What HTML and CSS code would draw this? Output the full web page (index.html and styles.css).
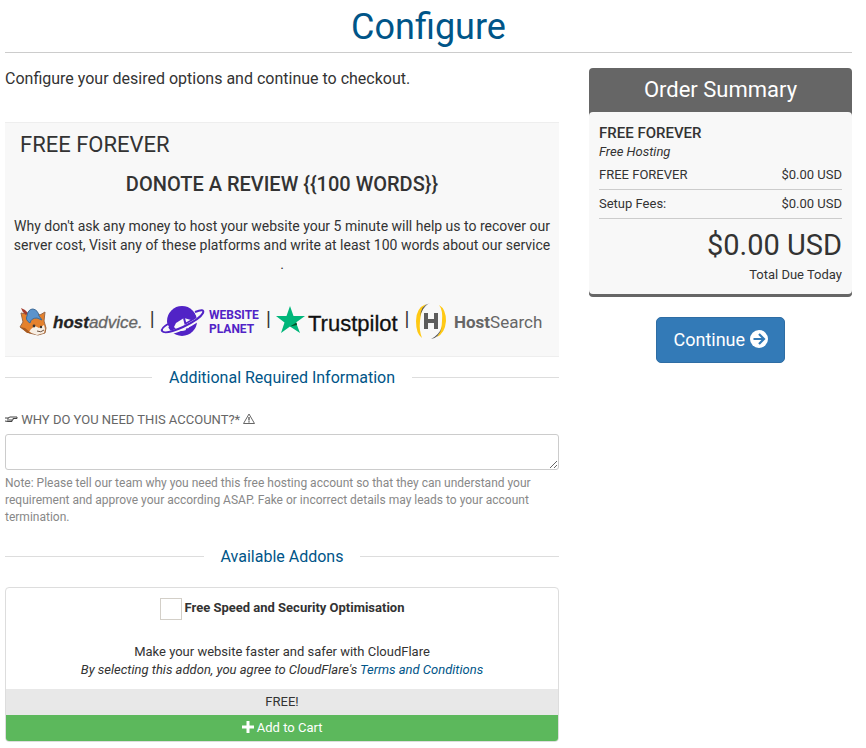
FILE: index.html
```html
<!DOCTYPE html>
<html lang="en">
<head>
<meta charset="utf-8">
<meta name="viewport" content="width=device-width, initial-scale=1">
<title>Configure</title>
<link rel="stylesheet" href="styles.css">
</head>
<body>
<main class="page">
  <h1 class="page-title">Configure</h1>
  <div class="columns">
    <div class="main-col">
      <p class="intro">Configure your desired options and continue to checkout.</p>

      <section class="product">
        <h2 class="product-title">FREE FOREVER</h2>
        <h3 class="product-heading">DONOTE A REVIEW {{100 WORDS}}</h3>
        <p class="product-text">Why don't ask any money to host your website your 5 minute will help us to recover our server cost, Visit any of these platforms and write at least 100 words about our service<br>.</p>
        <div class="logos">
          <svg class="logo" width="125" height="42" viewBox="0 0 125 42" role="img" aria-label="hostadvice">
            <path d="M1 13L6 14L13 11L20 15L25 12L24 21L26 28L25 33L18 35L9 33L3 29L0 27L3 22Z" fill="#e5812c" stroke="#9a6a49" stroke-width="1"/>
            <path d="M11 29L15 26L19 28L24 25L25 29L24 33L17 35L9 32Z" fill="#f7efe5"/>
            <path d="M0 27L5 28L11 33L7 33Z" fill="#a85a20"/>
            <path d="M1 8L5 10L8 13L6 15Q2 12 1 8Z" fill="#a33a2b"/>
            <path d="M7 16Q8 9 13 9Q18 10 19 16L22 20L17 18Q11 18 10 23Q5 20 7 16Z" fill="#5b93cc" stroke="#3c6a98" stroke-width="1"/>
            <circle cx="14" cy="26" r="1.4" fill="#3b3430"/><circle cx="21" cy="27" r="1.2" fill="#3b3430"/>
            <path d="M17 31Q21 33 24 30" fill="none" stroke="#6b5140" stroke-width="1"/>
            <text x="33" y="28" class="word-advice"><tspan class="word-host">host</tspan>advice.</text>
          </svg>
          <span class="bar">|</span>
          <svg class="logo" width="102" height="42" viewBox="0 0 102 42" role="img" aria-label="Website Planet">
            <circle cx="23" cy="21" r="15" fill="#5123c6"/>
            <path d="M15 27L17 23L25 18L32 20Q32 27 27 30Q20 33 15 27Z" fill="#f8f8f8"/>
            <path d="M25 18L28 30M26 24L33 20" stroke="#5123c6" stroke-width="2"/>
            <path d="M36 13Q46 9 44 14Q41 20 24 28Q6 36 3 32Q2 29 9 25" fill="none" stroke="#f8f8f8" stroke-width="4"/>
            <path d="M36 12Q46 8 44 13Q41 19 24 27Q6 35 3 31Q2 28 9 24" fill="none" stroke="#5123c6" stroke-width="2"/>
            <text x="50" y="19" class="word-planet">WEBSITE</text>
            <text x="50" y="33" class="word-planet">PLANET</text>
          </svg>
          <span class="bar">|</span>
          <svg class="logo" width="124" height="42" viewBox="0 0 124 42" role="img" aria-label="Trustpilot">
            <path d="M14 6L17.500 16H29L20 22.500L24 33L14 26.500L5 33L8.500 22.500L0 16H10.500Z" fill="#00b67a"/>
            <path d="M14 26.500L20.500 22.500L21 25Z" fill="#005128"/>
            <text x="32" y="31" class="word-trust">Trustpilot</text>
          </svg>
          <span class="bar">|</span>
          <svg class="logo" width="130" height="42" viewBox="0 0 130 42" role="img" aria-label="HostSearch">
            <path d="M12 4Q2 8 2 21Q2 34 8 38Q5 31 6 21Q7 9 12 4Z" fill="#ffc914"/>
            <path d="M6 17Q7 5 16 3L14 4Q8 8 6 17Z" fill="#555"/>
            <path d="M25 5Q32 9 32 21Q31 33 23 37Q28 30 28 21Q29 10 25 5Z" fill="#ffc914"/>
            <path d="M28 27Q25 38 17 39Q25 35 28 27Z" fill="#555"/>
            <path d="M12 13V29M22 13V29M12 21H22" stroke="#5c5c5c" stroke-width="4"/>
            <text x="40" y="28" class="word-search"><tspan class="word-bold">Host</tspan>Search</text>
          </svg>
        </div>
      </section>

      <h2 class="divider"><span>Additional Required Information</span></h2>

      <div class="field">
        <label class="field-label" for="why"><svg width="13" height="10" viewBox="0 0 13 10" aria-hidden="true"><path d="M0 4H3L5 3H12V4.500H8M8 4.500V6H4M7 6V7.500H3L0 7M3 4V7.500" fill="none" stroke="#444" stroke-width="1"/></svg> WHY DO YOU NEED THIS ACCOUNT?* <svg width="12" height="11" viewBox="0 0 12 11" aria-hidden="true"><path d="M6 1L11.500 10.500H.5Z" fill="none" stroke="#666" stroke-width="1"/><path d="M6 4V7.500M6 8.300V9.500" stroke="#444" stroke-width="1.200"/></svg></label>
        <textarea id="why" class="field-input" rows="1"></textarea>
        <p class="field-note">Note: Please tell our team why you need this free hosting account so that they can understand your requirement and approve your according ASAP. Fake or incorrect details may leads to your account termination.</p>
      </div>

      <h2 class="divider divider-addons"><span>Available Addons</span></h2>

      <section class="addon">
        <div class="addon-body">
          <div class="addon-option">
            <input type="checkbox" id="addon" class="addon-check">
            <label for="addon">Free Speed and Security Optimisation</label>
          </div>
          <p class="addon-text">Make your website faster and safer with CloudFlare<br><em>By selecting this addon, you agree to CloudFlare's <a href="#">Terms and Conditions</a></em></p>
        </div>
        <div class="addon-price">FREE!</div>
        <button type="button" class="addon-add"><svg width="12" height="12" viewBox="0 0 12 12" aria-hidden="true"><path d="M6 0V12M0 6H12" stroke="#fff" stroke-width="3"/></svg> Add to Cart</button>
      </section>
    </div>

    <aside class="side-col">
      <section class="summary">
        <h2 class="summary-title">Order Summary</h2>
        <div class="summary-body">
          <strong class="summary-name">FREE FOREVER</strong>
          <em class="summary-group">Free Hosting</em>
          <div class="summary-row"><span>FREE FOREVER</span><span>$0.00 USD</span></div>
          <div class="summary-row"><span>Setup Fees:</span><span>$0.00 USD</span></div>
          <div class="summary-total">$0.00 USD</div>
          <div class="summary-due">Total Due Today</div>
        </div>
      </section>
      <button type="button" class="continue">Continue <svg width="18" height="18" viewBox="0 0 18 18" aria-hidden="true"><circle cx="9" cy="9" r="9" fill="#fff"/><path d="M3.500 9H13.500M9 4L14 9L9 14" fill="none" stroke="#337ab7" stroke-width="2.200"/></svg></button>
    </aside>
  </div>
</main>
</body>
</html>
```
FILE: styles.css
```css
* { box-sizing: border-box; }
body { margin: 0; background: #fff; color: #333; font: 13px/18px Roboto, sans-serif; }
h1, h2, h3, p { margin: 0; font-weight: 400; }
a { color: #058; text-decoration: none; }
button { font-family: inherit; cursor: pointer; }
.page { padding: 0 14px 0 5px; }
.page-title { padding: 7px 0 5px; border-bottom: 1px solid #ccc; color: #058; font-size: 36px; line-height: 40px; text-align: center; }
.columns { display: grid; grid-template-columns: minmax(0, 554fr) minmax(0, 263fr); gap: 30px; padding-top: 15px; }
.intro { margin-bottom: 33px; font-size: 16px; line-height: 21px; }

.product { padding: 10px 15px 14px; background: #f8f8f8; border-top: 1px solid #eee; border-bottom: 1px solid #eee; }
.product-title { font-size: 22px; line-height: 24px; }
.product-heading { margin-top: 16px; font-size: 20px; font-weight: 500; line-height: 22px; text-align: center; }
.product-text { margin: 22px -8px 0; font-size: 14px; line-height: 19px; text-align: center; }
.logos { display: flex; align-items: center; justify-content: space-between; margin-top: 26px; }
.logo { display: block; overflow: visible; }
.bar { font-size: 20px; line-height: 38px; align-self: flex-start; }
.word-advice { font: italic 17px "Liberation Sans", sans-serif; fill: #666; stroke: #666; stroke-width: .3; }
.word-host { font-weight: 700; fill: #222; stroke: #222; }
.word-planet { font: 700 12px Roboto, sans-serif; fill: #5123c6; }
.word-trust { font: 22px "Liberation Sans", sans-serif; fill: #111; stroke: #111; stroke-width: .3; }
.word-search { font: 17px Roboto, sans-serif; fill: #666; }
.word-bold { font-weight: 700; }

.divider { display: flex; align-items: center; gap: 17px; margin-top: 10px; color: #058; font-size: 16px; line-height: 21px; }
.divider::before, .divider::after { content: ""; flex: 1; border-top: 1px solid #ddd; }
.divider-addons { margin-top: 20px; }
.field { margin-top: 23px; }
.field-label { display: block; color: #666; line-height: 18px; }
.field-input { display: block; width: 100%; height: 36px; margin: 5px 0; border: 1px solid #ccc; border-radius: 3px; resize: vertical; }
.field-note { color: #888; font-size: 12px; line-height: 17px; }

.addon { margin-top: 20px; border: 1px solid #ddd; border-radius: 4px; overflow: hidden; text-align: center; }
.addon-body { padding: 10px; }
.addon-option { display: flex; justify-content: center; gap: 3px; font-weight: 700; line-height: 20px; }
.addon-check { appearance: none; width: 22px; height: 22px; margin: 0; border: 1px solid #d3cfc8; background: #fff; }
.addon-text { margin-top: 23px; }
.addon-price { background: #e8e8e8; line-height: 26px; }
.addon-add { display: block; width: 100%; padding: 0; border: 0; background: #5cb85c; color: #fff; font-size: 13px; line-height: 26px; }
.addon-add svg { vertical-align: -1px; }

.summary { background: #666; border-bottom: 3px solid #666; border-radius: 4px; }
.summary-title { color: #fff; font-size: 22px; line-height: 44px; text-align: center; }
.summary-body { padding: 11px 10px 10px; background: #f8f8f8; border-radius: 4px; }
.summary-name, .summary-group { display: block; }
.summary-name { font-size: 15px; font-weight: 500; line-height: 20px; }
.summary-row { display: flex; justify-content: space-between; padding: 5px 0; border-bottom: 1px solid #ccc; }
.summary-total { margin-top: 10px; font-size: 29px; line-height: 32px; text-align: right; }
.summary-due { margin-top: 5px; text-align: right; }
.continue { display: block; margin: 20px auto 0; padding: 10px 16px; border: 1px solid #2e6da4; border-radius: 5px; background: #337ab7; color: #fff; font-size: 18px; line-height: 24px; }
.continue svg { vertical-align: -2px; }
```
